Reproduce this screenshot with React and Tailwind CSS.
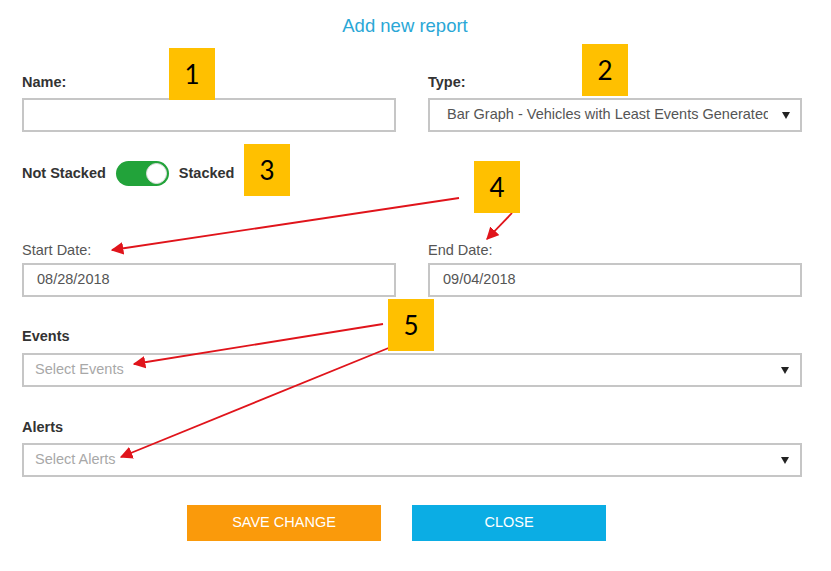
const font = { fontFamily: '"Liberation Sans", Arial, sans-serif' };

const Caret = () => (
  <svg width="8" height="7" viewBox="0 0 8 7" className="shrink-0">
    <path d="M0 0 H8 L4 7 Z" fill="#222" />
  </svg>
);

const Callout = ({ n, className }) => (
  <div
    className={`absolute w-[46px] h-[52px] bg-[#ffc000] flex items-center justify-center text-[26px] text-black ${className}`}
    style={{ fontFamily: 'Lato, "Noto Sans", sans-serif' }}
  >
    {n}
  </div>
);

const arrows = [
  [459, 198, 112, 250],
  [512, 213, 487, 239],
  [383, 324, 134, 364],
  [391, 347, 121, 457],
];

const Arrows = () => (
  <svg className="absolute inset-0 pointer-events-none" width="831" height="571">
    <defs>
      <marker id="head" viewBox="0 0 10 10" refX="9" refY="5" markerWidth="7" markerHeight="7" orient="auto">
        <path d="M0 0 L10 5 L0 10 Z" fill="#e0141b" />
      </marker>
    </defs>
    {arrows.map(([x1, y1, x2, y2], i) => (
      <line key={i} x1={x1} y1={y1} x2={x2} y2={y2} stroke="#e0141b" strokeWidth="1.8" markerEnd="url(#head)" />
    ))}
  </svg>
);

const fieldBox = "h-[34px] border-2 border-[#c6c6c6] bg-white flex items-center text-[14.5px]";
const boldLabel = "block text-[14.5px] leading-[16px] font-bold text-[#333]";

export default function App() {
  return (
    <div className="relative w-[831px] h-[571px] bg-white overflow-hidden" style={font}>
      <div className="pl-[22px] pr-[29px] pt-[14px]">
        <h1 className="text-center text-[18.5px] leading-[24px] text-[#2aa7d6] pr-[14px]">Add new report</h1>

        <div className="grid grid-cols-2 gap-[32px] mt-[36px]">
          <div>
            <label className={`${boldLabel} mb-[8px]`}>Name:</label>
            <div className={fieldBox} />
          </div>
          <div>
            <label className={`${boldLabel} mb-[8px]`}>Type:</label>
            <div className={`${fieldBox} pl-[17px] pr-[10px] text-[#555]`}>
              <span className="flex-1 whitespace-nowrap overflow-hidden mr-[14px]">Bar Graph - Vehicles with Least Events Generated</span>
              <Caret />
            </div>
          </div>
        </div>

        <div className="flex items-center mt-[29px] h-[25px] text-[14.5px] font-bold text-[#333]">
          <span>Not Stacked</span>
          <div className="ml-[10px] w-[53px] h-[25px] rounded-full bg-[#22a33a] flex items-center justify-end pr-[2px]">
            <div className="w-[21px] h-[21px] rounded-full bg-white border border-[#ddd]" />
          </div>
          <span className="ml-[10px]">Stacked</span>
        </div>

        <div className="grid grid-cols-2 gap-[32px] mt-[56px]">
          <div>
            <label className="block text-[14.5px] leading-[16px] text-[#555] mb-[5px]">Start Date:</label>
            <div className={`${fieldBox} pl-[13px] text-[#555]`}>08/28/2018</div>
          </div>
          <div>
            <label className="block text-[14.5px] leading-[16px] text-[#555] mb-[5px]">End Date:</label>
            <div className={`${fieldBox} pl-[13px] text-[#555]`}>09/04/2018</div>
          </div>
        </div>

        <label className={`${boldLabel} mt-[31px] mb-[9px]`}>Events</label>
        <div className={`${fieldBox} pl-[11px] pr-[11px] text-[#a8a8a8]`}>
          <span className="flex-1">Select Events</span>
          <Caret />
        </div>

        <label className={`${boldLabel} mt-[32px] mb-[8px]`}>Alerts</label>
        <div className={`${fieldBox} pl-[11px] pr-[11px] text-[#a8a8a8]`}>
          <span className="flex-1">Select Alerts</span>
          <Caret />
        </div>

        <div className="flex gap-[31px] mt-[28px] pl-[165px]">
          <button className="w-[194px] h-[36px] bg-[#fa9a0b] text-white text-[14.5px] uppercase">Save Change</button>
          <button className="w-[194px] h-[36px] bg-[#0bade4] text-white text-[14.5px] uppercase">Close</button>
        </div>
      </div>

      <Arrows />
      <Callout n="1" className="left-[169px] top-[48px]" />
      <Callout n="2" className="left-[582px] top-[44px]" />
      <Callout n="3" className="left-[244px] top-[144px]" />
      <Callout n="4" className="left-[474px] top-[161px]" />
      <Callout n="5" className="left-[388px] top-[299px]" />
    </div>
  );
}
